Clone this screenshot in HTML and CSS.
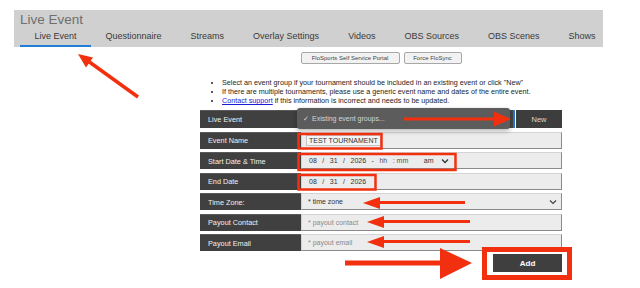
FILE: index.html
```html
<!DOCTYPE html>
<html lang="en">
<head>
    <meta charset="UTF-8">
    <meta name="viewport" content="width=device-width, initial-scale=1.0">
    <title>Live Event</title>
    <link rel="stylesheet" href="styles.css">
</head>
<body>
    <div class="header">
        <div class="title">Live Event</div>
        <div class="tabs">
            <span class="tab active">Live Event</span>
            <span class="tab">Questionnaire</span>
            <span class="tab">Streams</span>
            <span class="tab">Overlay Settings</span>
            <span class="tab">Videos</span>
            <span class="tab">OBS Sources</span>
            <span class="tab">OBS Scenes</span>
            <span class="tab">Shows</span>
        </div>
    </div>

    <div class="content">
        <div class="tools">
            <button class="tool-btn">FloSports Self Service Portal</button>
            <button class="tool-btn">Force FloSync</button>
        </div>

        <ul class="notes">
            <li>Select an event group if your tournament should be included in an existing event or click "New"</li>
            <li>If there are multiple tournaments, please use a generic event name and dates of the entire event.</li>
            <li><a href="#">Contact support</a> if this information is incorrect and needs to be updated.</li>
        </ul>

        <div class="form">
            <div class="row row-group">
                <div class="label">Live Event</div>
                <div class="group-select"></div>
                <div class="new-btn">New</div>
                <div class="popup"><span class="check">&#10003;</span>Existing event groups...</div>
            </div>
            <div class="row">
                <div class="label">Event Name</div>
                <div class="field"><span class="value-box">TEST TOURNAMENT</span></div>
            </div>
            <div class="row">
                <div class="label">Start Date &amp; Time</div>
                <div class="field date">
                    <span>08</span><span>/</span><span>31</span><span>/</span><span>2026</span>
                    <span class="sep">-</span><span class="dim">hh</span><span class="dim">: mm</span>
                    <span class="ampm">am</span>
                    <svg class="chev" width="8" height="6" viewBox="0 0 8 6"><path d="M1 1.5 L4 4.5 L7 1.5" fill="none" stroke="#333" stroke-width="1.3"/></svg>
                </div>
            </div>
            <div class="row">
                <div class="label">End Date</div>
                <div class="field date">
                    <span>08</span><span>/</span><span>31</span><span>/</span><span>2026</span>
                </div>
            </div>
            <div class="row">
                <div class="label">Time Zone:</div>
                <div class="field select">
                    <span>* time zone</span>
                    <svg class="chev" width="8" height="6" viewBox="0 0 8 6"><path d="M1 1.5 L4 4.5 L7 1.5" fill="none" stroke="#444" stroke-width="1.2"/></svg>
                </div>
            </div>
            <div class="row">
                <div class="label">Payout Contact</div>
                <div class="field placeholder">* payout contact</div>
            </div>
            <div class="row">
                <div class="label">Payout Email</div>
                <div class="field placeholder">* payout email</div>
            </div>
        </div>

        <div class="actions">
            <button class="add-btn">Add</button>
        </div>
    </div>

    <!-- annotation marks drawn over the screenshot -->
    <svg class="marks" width="640" height="288" viewBox="0 0 640 288">
        <g fill="#f2300f" stroke="none">
            <polygon points="78,54 93,57.5 86,67.5"/>
            <polygon points="511,119 494,111.5 494,126.5"/>
            <polygon points="363,203 380,197 380,209"/>
            <polygon points="367,222 384,216 384,228"/>
            <polygon points="367,242 384,236 384,248"/>
            <polygon points="472,263 440,248 440,279"/>
            <rect x="345" y="260.5" width="97" height="5"/>
        </g>
        <g stroke="#f2300f" fill="none">
            <line x1="138" y1="97" x2="88" y2="61" stroke-width="3.5"/>
            <line x1="404" y1="119" x2="496" y2="119" stroke-width="3"/>
            <line x1="378" y1="202.5" x2="465" y2="202.5" stroke-width="3"/>
            <line x1="382" y1="221.5" x2="470" y2="221.5" stroke-width="3"/>
            <line x1="382" y1="241.5" x2="470" y2="241.5" stroke-width="3"/>
            <rect x="298.5" y="134" width="83" height="14.5" stroke-width="2.5"/>
            <rect x="298.5" y="154" width="157" height="16" stroke-width="2.5"/>
            <rect x="298.5" y="175" width="77" height="14.5" stroke-width="2.5"/>
            <rect x="484.5" y="249.5" width="85" height="28" stroke-width="5"/>
        </g>
    </svg>
</body>
</html>
```

FILE: styles.css
```css
*{
    box-sizing: border-box;
    margin: 0;
    padding: 0;
}
body{
    position: relative;
    width: 640px;
    height: 288px;
    overflow: hidden;
    background: #fff;
    font-family: "Liberation Sans", Arial, sans-serif;
    color: #333;
}

.header{
    margin: 10px 0 0 14px;
    width: 589px;
    height: 37px;
    background: #d0d0d0;
}
.title{
    padding: 2px 0 0 6px;
    font-size: 13.5px;
    line-height: 16px;
    color: #6f6f6f;
}
.tabs{
    display: flex;
    padding-left: 6px;
    margin-top: 3px;
}
.tab{
    flex-shrink: 0;
    white-space: nowrap;
    padding: 0 14.5px 3px;
    font-size: 9px;
    line-height: 11px;
    color: #3a3a3a;
    border-bottom: 2px solid transparent;
}
.tab.active{
    border-bottom-color: #1f7fd4;
}

.content{
    width: 362px;
    margin-left: 200px;
}
.tools{
    display: flex;
    justify-content: center;
    gap: 4px;
    margin-top: 5px;
}
.tool-btn{
    height: 12px;
    padding: 0;
    white-space: nowrap;
    font-family: inherit;
    font-size: 6px;
    color: #444;
    background: #f2f2f2;
    border: 1px solid #a8a8a8;
    border-radius: 2px;
}
.tool-btn:first-child{
    width: 99px;
}
.tool-btn:last-child{
    width: 58px;
}

.notes{
    margin-top: 14px;
    padding-left: 22px;
    font-size: 7.2px;
    line-height: 9px;
    color: #222;
}
.notes a{
    color: #1a1ad8;
}

.form{
    display: flex;
    flex-direction: column;
    gap: 3.5px;
    margin-top: 5px;
}
.row{
    display: flex;
    height: 17px;
}
.label{
    width: 101px;
    flex-shrink: 0;
    padding-left: 8px;
    display: flex;
    align-items: center;
    font-size: 7.3px;
    color: #f0f0f0;
    background: #404040;
    border-top: 1px solid #5a5a5a;
}
.field{
    flex-grow: 1;
    display: flex;
    align-items: center;
    padding-left: 6px;
    font-size: 7px;
    color: #333;
    background: #ececec;
    border: 1px solid #d4d4d4;
    border-right-color: #8a8a8a;
    border-bottom-color: #8a8a8a;
}
.value-box{
    padding: 1px 2px;
    margin-left: -2px;
    border: 1px solid #c4c4c4;
    background: #f4f4f4;
}
.date span{
    margin-right: 5.5px;
}
.date span:first-child{
    margin-left: 1px;
}
.date .dim{
    color: #555;
}
.date .ampm{
    margin-left: 10px;
    margin-right: 7px;
}
.select{
    justify-content: space-between;
    padding-right: 4px;
}
.placeholder{
    color: #8a8a8a;
}

.row-group{
    position: relative;
    height: 18px;
}
.group-select{
    flex-grow: 1;
    background: #454545;
    border-right: 2px solid #2677c8;
    margin-right: 1px;
}
.new-btn{
    width: 46px;
    display: flex;
    align-items: center;
    justify-content: center;
    font-size: 7.5px;
    color: #d8d8d8;
    background: #3d3d3d;
}
.popup{
    position: absolute;
    left: 97px;
    top: -2px;
    width: 213px;
    height: 21px;
    display: flex;
    align-items: center;
    padding-left: 6px;
    font-size: 7px;
    color: #d6d6d6;
    background: #5c5c5c;
    border-radius: 3px;
    box-shadow: 0 2px 5px rgba(0,0,0,0.3);
}
.check{
    margin-right: 3px;
}

.actions{
    display: flex;
    justify-content: flex-end;
    margin-top: 3px;
}
.add-btn{
    width: 69px;
    height: 18px;
    font-family: inherit;
    font-size: 8px;
    font-weight: bold;
    color: #fff;
    background: #3f3f3f;
    border: none;
}

.marks{
    position: absolute;
    top: 0;
    left: 0;
    pointer-events: none;
}
```
